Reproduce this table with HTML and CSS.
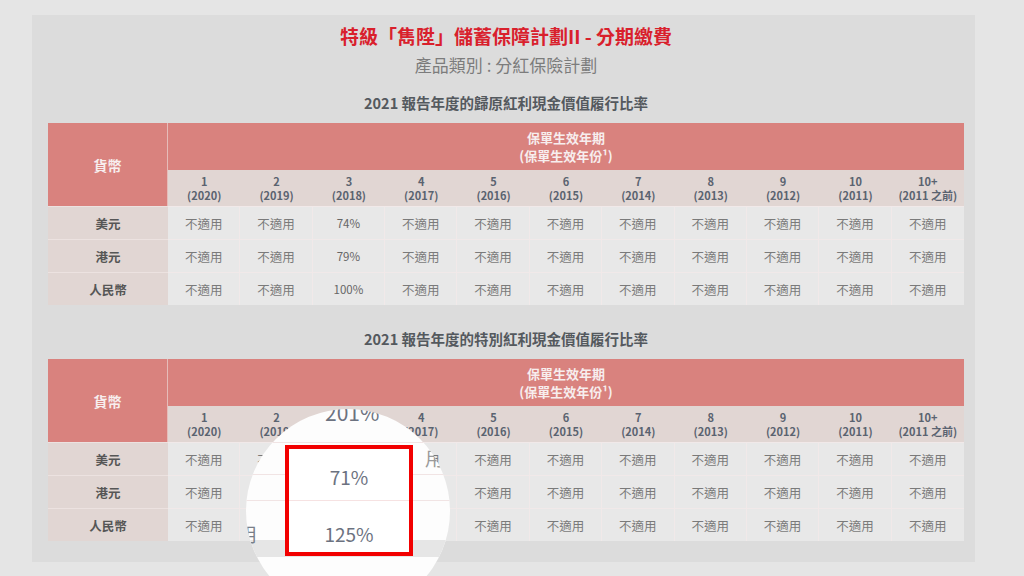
FILE: index.html
```html
<!DOCTYPE html>
<html lang="zh-Hant">
	<head>
		<meta charset="utf-8">
		<title>特級「雋陞」儲蓄保障計劃II</title>
		<link rel="stylesheet" href="styles.css">
	</head>
	<body>
		<div class="page">
			<div class="panel">
				<h1 class="plan-title">特級「雋陞」儲蓄保障計劃II - 分期繳費</h1>
				<p class="plan-type">產品類別 : 分紅保險計劃</p>

				<h2 class="section-title">2021 報告年度的歸原紅利現金價值履行比率</h2>
				<table class="ratio">
					<tr class="head-top">
						<th class="currency-head" rowspan="2">貨幣</th>
						<th colspan="11">保單生效年期<br>(保單生效年份¹)</th>
					</tr>
					<tr class="head-years">
						<th>1<br>(2020)</th>
						<th>2<br>(2019)</th>
						<th>3<br>(2018)</th>
						<th>4<br>(2017)</th>
						<th>5<br>(2016)</th>
						<th>6<br>(2015)</th>
						<th>7<br>(2014)</th>
						<th>8<br>(2013)</th>
						<th>9<br>(2012)</th>
						<th>10<br>(2011)</th>
						<th>10+<br>(2011 之前)</th>
					</tr>
					<tr>
						<td class="currency">美元</td>
						<td>不適用</td><td>不適用</td><td class="num">74%</td><td>不適用</td><td>不適用</td><td>不適用</td><td>不適用</td><td>不適用</td><td>不適用</td><td>不適用</td><td>不適用</td>
					</tr>
					<tr>
						<td class="currency">港元</td>
						<td>不適用</td><td>不適用</td><td class="num">79%</td><td>不適用</td><td>不適用</td><td>不適用</td><td>不適用</td><td>不適用</td><td>不適用</td><td>不適用</td><td>不適用</td>
					</tr>
					<tr>
						<td class="currency">人民幣</td>
						<td>不適用</td><td>不適用</td><td class="num">100%</td><td>不適用</td><td>不適用</td><td>不適用</td><td>不適用</td><td>不適用</td><td>不適用</td><td>不適用</td><td>不適用</td>
					</tr>
				</table>

				<h2 class="section-title second">2021 報告年度的特別紅利現金價值履行比率</h2>
				<table class="ratio">
					<tr class="head-top">
						<th class="currency-head" rowspan="2">貨幣</th>
						<th colspan="11">保單生效年期<br>(保單生效年份¹)</th>
					</tr>
					<tr class="head-years">
						<th>1<br>(2020)</th>
						<th>2<br>(2019)</th>
						<th>3<br>(2018)</th>
						<th>4<br>(2017)</th>
						<th>5<br>(2016)</th>
						<th>6<br>(2015)</th>
						<th>7<br>(2014)</th>
						<th>8<br>(2013)</th>
						<th>9<br>(2012)</th>
						<th>10<br>(2011)</th>
						<th>10+<br>(2011 之前)</th>
					</tr>
					<tr>
						<td class="currency">美元</td>
						<td>不適用</td><td>不適用</td><td class="num">71%</td><td>不適用</td><td>不適用</td><td>不適用</td><td>不適用</td><td>不適用</td><td>不適用</td><td>不適用</td><td>不適用</td>
					</tr>
					<tr>
						<td class="currency">港元</td>
						<td>不適用</td><td>不適用</td><td class="num">201%</td><td>不適用</td><td>不適用</td><td>不適用</td><td>不適用</td><td>不適用</td><td>不適用</td><td>不適用</td><td>不適用</td>
					</tr>
					<tr>
						<td class="currency">人民幣</td>
						<td>不適用</td><td>不適用</td><td class="num">125%</td><td>不適用</td><td>不適用</td><td>不適用</td><td>不適用</td><td>不適用</td><td>不適用</td><td>不適用</td><td>不適用</td>
					</tr>
				</table>
			</div>

			<!-- magnifier over the 3rd column of the second table -->
			<div class="magnifier">
				<span class="zoom-text zoom-top">201%</span>
				<span class="zoom-line zoom-line-a"></span>
				<span class="zoom-line zoom-line-b"></span>
				<span class="zoom-line zoom-line-c"></span>
				<span class="zoom-band"></span>
				<span class="zoom-text zoom-left-1">不適用</span>
				<span class="zoom-text zoom-right-1">不適用</span>
				<span class="zoom-text zoom-left-3">不適用</span>
				<div class="zoom-box">
					<div class="zoom-cell">71%</div>
					<div class="zoom-cell last">125%</div>
				</div>
			</div>
		</div>
	</body>
</html>
```

FILE: styles.css
```css
* {
	box-sizing: border-box;
}
body {
	margin: 0;
	background-color: #e5e5e5;
	font-family: "Noto Sans CJK TC", "Noto Sans", sans-serif;
}
.page {
	position: relative;
	width: 1024px;
	height: 576px;
	overflow: hidden;
	padding: 15px 0 0 32px;
}
.panel {
	width: 943px;
	height: 547px;
	padding: 9px 11px 0 16px;
	background-color: #dcdcdc;
	text-align: center;
}
.plan-title {
	margin: 0;
	font-size: 19px;
	line-height: 24px;
	font-weight: bold;
	color: #d9202c;
}
.plan-type {
	margin: 5px 0 0 0;
	font-size: 17px;
	line-height: 24px;
	color: #7c7c7c;
}
.section-title {
	margin: 16px 0 10px 0;
	font-size: 14.5px;
	line-height: 20px;
	font-weight: bold;
	color: #54595e;
}
.section-title.second {
	margin-top: 24px;
}
.ratio {
	width: 916px;
	table-layout: fixed;
	border-collapse: separate;
	border-spacing: 0;
}
.ratio th,
.ratio td {
	padding: 0;
	text-align: center;
}
.head-top th {
	height: 47px;
	background-color: #d9827e;
	color: #f7eeee;
	font-size: 13px;
	line-height: 18px;
	font-weight: bold;
}
.ratio .currency-head {
	width: 120px;
	border-right: 1px solid #e6bcb9;
	font-size: 14px;
}
.head-years th {
	height: 36px;
	background-color: #e1d6d3;
	color: #5a6370;
	font-size: 11px;
	line-height: 14px;
	font-weight: bold;
}
.ratio td {
	height: 33px;
	background-color: #e8e8e8;
	color: #7a7a7a;
	font-size: 12.5px;
	border-right: 1px solid #f1e9e9;
	border-top: 1px solid #f1e9e9;
}
.ratio td:last-child {
	border-right: none;
}
.ratio td.currency {
	background-color: #e1d6d3;
	color: #565656;
	font-weight: bold;
	border-right: none;
	border-top: 1px solid #ece2e0;
}
.ratio td.num {
	font-size: 11.5px;
	color: #666;
}

/* magnifier */
.magnifier {
	position: absolute;
	left: 246px;
	top: 409px;
	width: 204px;
	height: 204px;
	border-radius: 50%;
	overflow: hidden;
	background-color: #fdfdfd;
}
.zoom-text {
	position: absolute;
	font-size: 19px;
	line-height: 24px;
	color: #7a7f88;
	white-space: nowrap;
}
.zoom-top {
	left: 79px;
	top: -9px;
	font-size: 21px;
	color: #6c7280;
}
.zoom-left-1 {
	left: -46px;
	top: 37px;
}
.zoom-right-1 {
	left: 117px;
	top: 37px;
	letter-spacing: 12px;
	color: #9a9a9a;
}
.zoom-left-3 {
	left: -46px;
	top: 113px;
}
.zoom-line {
	position: absolute;
	left: 0;
	width: 204px;
	height: 1px;
	background-color: #f1e4e4;
}
.zoom-line-a {
	top: 33px;
}
.zoom-line-b {
	top: 65px;
}
.zoom-line-c {
	top: 91px;
}
.zoom-band {
	position: absolute;
	left: 0;
	top: 131px;
	width: 204px;
	height: 17px;
	background-color: #e6e6e6;
}
.zoom-box {
	position: absolute;
	left: 39px;
	top: 36px;
	width: 128px;
	height: 111px;
	border: 4px solid #f20000;
	background-color: #fff;
	display: flex;
	flex-direction: column;
}
.zoom-cell {
	flex: 1;
	display: flex;
	align-items: center;
	justify-content: center;
	font-size: 19px;
	color: #6c7280;
	border-bottom: 1px solid #f6e2e2;
	padding-top: 4px;
}
.zoom-cell.last {
	border-bottom: none;
	align-items: flex-end;
	padding: 0 0 5px 0;
}
```
